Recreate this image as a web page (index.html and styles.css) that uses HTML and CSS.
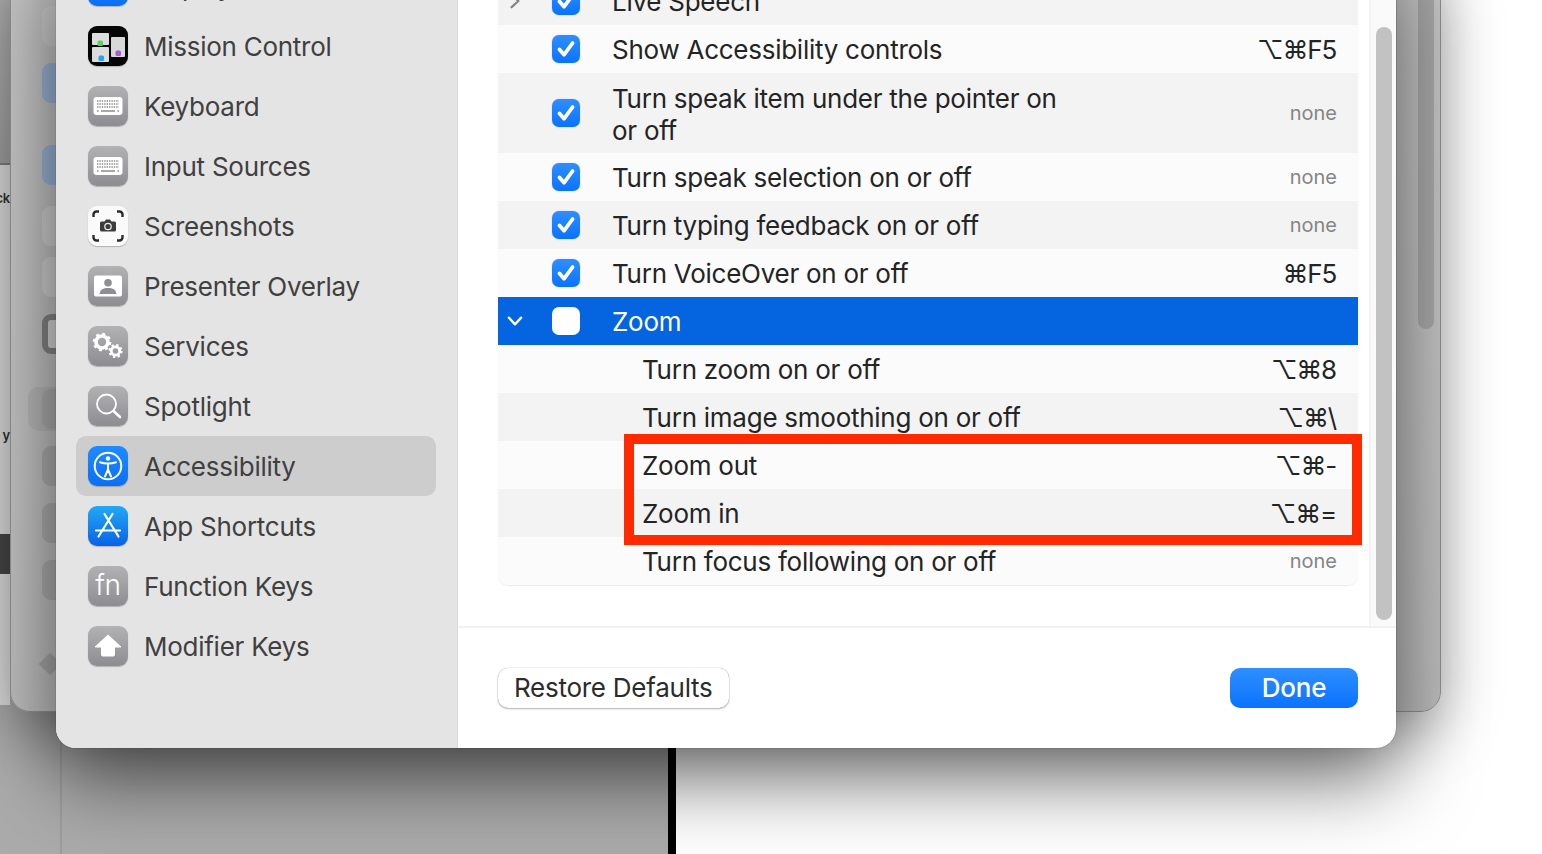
FILE: index.html
```html
<!DOCTYPE html>
<html lang="en">
<head>
    <meta charset="UTF-8">
    <meta name="viewport" content="width=device-width, initial-scale=1.0">
    <title>Keyboard Shortcuts - Accessibility</title>
    <link rel="stylesheet" href="styles.css">
</head>
<body>
    <svg class="defs" width="0" height="0" aria-hidden="true">
        <symbol id="keyboard" viewBox="0 0 40 40">
            <rect x="5.5" y="11" width="29" height="18" rx="3" fill="#fff"/>
            <path d="M9 15h22M9 18h22M9 21h22" stroke="#8c8c90" stroke-width="1.6" stroke-dasharray="1.4 1"/>
            <path d="M13 25h14" stroke="#8c8c90" stroke-width="1.6"/>
            <path d="M9 25h1.6M29.4 25H31" stroke="#8c8c90" stroke-width="1.6"/>
        </symbol>
        <symbol id="tick" viewBox="0 0 28 28">
            <path d="M7.5 14.5l4.6 5.2L20.6 8" fill="none" stroke="#fff" stroke-width="3.800" stroke-linecap="round" stroke-linejoin="round"/>
        </symbol>
    </svg>

    <div class="desktop">
        <div class="pane-gray"></div>
        <div class="pane-bar"></div>
        <div class="pane-white"></div>
    </div>

    <div class="under-strip">
        <div class="strip-top"></div>
        <div class="strip-light strip-a"><span class="strip-ck">ck</span><span class="strip-y">y</span></div>
        <div class="strip-dark"></div>
        <div class="strip-light strip-b"></div>
    </div>

    <div class="back-window">
        <div class="ghosts">
            <div class="ghost g-pink"></div>
            <div class="ghost g-blue"></div>
            <div class="ghost g-blue g-wide"></div>
            <div class="ghost g-pale"></div>
            <div class="ghost g-pale g-tight"></div>
            <div class="ghost g-dark"></div>
            <div class="ghost g-grey g-sel"></div>
            <div class="ghost g-grey"></div>
            <div class="ghost g-grey"></div>
            <div class="ghost g-grey"></div>
            <div class="ghost-tri"></div>
        </div>
        <div class="back-scroll"><div class="back-thumb"></div></div>
    </div>

    <div class="dialog">
        <aside class="sidebar">
            <div class="side-item">
                <span class="ico ico-blue"></span><span class="side-label">Displays</span>
            </div>
            <div class="side-item">
                <span class="ico ico-black">
                    <svg viewBox="0 0 40 40">
                        <rect x="4" y="7" width="17" height="12" rx="1" fill="#dcdcdc"/>
                        <rect x="4" y="21" width="17" height="15" rx="1" fill="#dcdcdc"/>
                        <rect x="23" y="11" width="14" height="20" rx="1" fill="#d8d8d8"/>
                        <rect x="9.5" y="14.500" width="5.500" height="5.500" rx="1.5" fill="#52d65a"/>
                        <rect x="10.500" y="29.500" width="5.500" height="5.500" rx="1.5" fill="#27a4f2"/>
                        <rect x="27.500" y="24.500" width="5.500" height="5.500" rx="1.500" fill="#a65bd6"/>
                    </svg>
                </span>
                <span class="side-label">Mission Control</span>
            </div>
            <div class="side-item">
                <span class="ico ico-gray"><svg viewBox="0 0 40 40"><use href="#keyboard"/></svg></span>
                <span class="side-label">Keyboard</span>
            </div>
            <div class="side-item">
                <span class="ico ico-gray"><svg viewBox="0 0 40 40"><use href="#keyboard"/></svg></span>
                <span class="side-label">Input Sources</span>
            </div>
            <div class="side-item">
                <span class="ico ico-white">
                    <svg viewBox="0 0 40 40">
                        <path d="M5.500 11V8.500a3 3 0 0 1 3-3H11M29 5.500h2.500a3 3 0 0 1 3 3V11M34.500 29v2.500a3 3 0 0 1-3 3H29M11 34.500H8.500a3 3 0 0 1-3-3V29" fill="none" stroke="#2b2b2b" stroke-width="2.400"/>
                        <path d="M13.500 15.500h3l1.500-2h4l1.500 2h3a1.500 1.500 0 0 1 1.500 1.500v7a1.500 1.500 0 0 1-1.500 1.500h-13a1.500 1.500 0 0 1-1.500-1.500v-7a1.500 1.500 0 0 1 1.500-1.500z" fill="#3c3c3c"/>
                        <circle cx="20" cy="20.500" r="3.200" fill="none" stroke="#e8e8e8" stroke-width="1.300"/>
                    </svg>
                </span>
                <span class="side-label">Screenshots</span>
            </div>
            <div class="side-item">
                <span class="ico ico-gray">
                    <svg viewBox="0 0 40 40">
                        <rect x="6" y="9.500" width="28" height="21" rx="2" fill="#fff"/>
                        <circle cx="20" cy="16.800" r="3.800" fill="#8e8e92"/>
                        <path d="M11.500 28c.5-4.500 4-6 8.500-6s8 1.500 8.500 6z" fill="#8e8e92"/>
                    </svg>
                </span>
                <span class="side-label">Presenter Overlay</span>
            </div>
            <div class="side-item">
                <span class="ico ico-gray">
                    <svg viewBox="0 0 40 40">
                        <circle cx="14" cy="16" r="6" fill="none" stroke="#fff" stroke-width="3.600"/>
                        <circle cx="14" cy="16" r="8" fill="none" stroke="#fff" stroke-width="2.600" stroke-dasharray="2.900 3.380"/>
                        <circle cx="27.500" cy="25" r="4.200" fill="none" stroke="#fff" stroke-width="2.800"/>
                        <circle cx="27.500" cy="25" r="6" fill="none" stroke="#fff" stroke-width="2.200" stroke-dasharray="2.300 2.410"/>
                    </svg>
                </span>
                <span class="side-label">Services</span>
            </div>
            <div class="side-item">
                <span class="ico ico-gray">
                    <svg viewBox="0 0 40 40">
                        <circle cx="18.500" cy="18" r="9.500" fill="none" stroke="#fff" stroke-width="1.800"/>
                        <path d="M25.500 25l6.500 6" stroke="#fff" stroke-width="2.600" stroke-linecap="round"/>
                    </svg>
                </span>
                <span class="side-label">Spotlight</span>
            </div>
            <div class="side-item is-selected">
                <span class="ico ico-blue">
                    <svg viewBox="0 0 40 40">
                        <circle cx="20" cy="20" r="13.300" fill="none" stroke="#fff" stroke-width="2"/>
                        <circle cx="20" cy="12.500" r="2.200" fill="#fff"/>
                        <path d="M12 16.200c2.600 1 5.300 1.400 8 1.400s5.400-.4 8-1.400M20 18v6M20 23.500L17 30.500M20 23.500l3 7" fill="none" stroke="#fff" stroke-width="2" stroke-linecap="round"/>
                    </svg>
                </span>
                <span class="side-label">Accessibility</span>
            </div>
            <div class="side-item">
                <span class="ico ico-store">
                    <svg viewBox="0 0 40 40">
                        <path d="M16.500 8L30.500 30.500M24.500 8L10.500 30.500M8 24.500h24" fill="none" stroke="#fff" stroke-width="2.200" stroke-linecap="round"/>
                    </svg>
                </span>
                <span class="side-label">App Shortcuts</span>
            </div>
            <div class="side-item">
                <span class="ico ico-gray ico-fn">fn</span>
                <span class="side-label">Function Keys</span>
            </div>
            <div class="side-item">
                <span class="ico ico-gray">
                    <svg viewBox="0 0 40 40">
                        <path d="M20 8.500L33 20.500a.6.600 0 0 1-.4 1H27v7a2 2 0 0 1-2 2h-10a2 2 0 0 1-2-2v-7H7.400a.6.600 0 0 1-.4-1z" fill="#fff"/>
                    </svg>
                </span>
                <span class="side-label">Modifier Keys</span>
            </div>
        </aside>

        <main class="main">
            <div class="content">
                <div class="list-area">
                    <div class="list">
                        <div class="row">
                            <span class="caret">
                                <svg viewBox="0 0 16 16"><path d="M5 2.500l6 5.500-6 5.500" fill="none" stroke="#858585" stroke-width="2" stroke-linecap="round" stroke-linejoin="round"/></svg>
                            </span>
                            <span class="check"><svg viewBox="0 0 28 28"><use href="#tick"/></svg></span>
                            <span class="label">Live Speech</span>
                        </div>
                        <div class="row row-odd">
                            <span class="caret"></span>
                            <span class="check"><svg viewBox="0 0 28 28"><use href="#tick"/></svg></span>
                            <span class="label">Show Accessibility controls</span>
                            <span class="keys">⌥⌘F5</span>
                        </div>
                        <div class="row">
                            <span class="caret"></span>
                            <span class="check"><svg viewBox="0 0 28 28"><use href="#tick"/></svg></span>
                            <span class="label label-wrap">Turn speak item under the pointer on or off</span>
                            <span class="keys keys-none">none</span>
                        </div>
                        <div class="row row-odd">
                            <span class="caret"></span>
                            <span class="check"><svg viewBox="0 0 28 28"><use href="#tick"/></svg></span>
                            <span class="label">Turn speak selection on or off</span>
                            <span class="keys keys-none">none</span>
                        </div>
                        <div class="row">
                            <span class="caret"></span>
                            <span class="check"><svg viewBox="0 0 28 28"><use href="#tick"/></svg></span>
                            <span class="label">Turn typing feedback on or off</span>
                            <span class="keys keys-none">none</span>
                        </div>
                        <div class="row row-odd">
                            <span class="caret"></span>
                            <span class="check"><svg viewBox="0 0 28 28"><use href="#tick"/></svg></span>
                            <span class="label">Turn VoiceOver on or off</span>
                            <span class="keys">⌘F5</span>
                        </div>
                        <div class="row row-active">
                            <span class="caret">
                                <svg viewBox="0 0 16 16"><path d="M2.500 5l5.500 6 5.500-6" fill="none" stroke="#fff" stroke-width="2" stroke-linecap="round" stroke-linejoin="round"/></svg>
                            </span>
                            <span class="check check-off"></span>
                            <span class="label">Zoom</span>
                        </div>
                        <div class="row row-odd row-sub">
                            <span class="label">Turn zoom on or off</span>
                            <span class="keys">⌥⌘8</span>
                        </div>
                        <div class="row row-sub">
                            <span class="label">Turn image smoothing on or off</span>
                            <span class="keys">⌥⌘\</span>
                        </div>
                        <div class="row row-odd row-sub">
                            <span class="label">Zoom out</span>
                            <span class="keys">⌥⌘-</span>
                        </div>
                        <div class="row row-sub">
                            <span class="label">Zoom in</span>
                            <span class="keys">⌥⌘=</span>
                        </div>
                        <div class="row row-odd row-sub row-last">
                            <span class="label">Turn focus following on or off</span>
                            <span class="keys keys-none">none</span>
                        </div>
                    </div>
                </div>
                <div class="scroll-col"><div class="scroll-thumb"></div></div>
            </div>
            <footer class="footer">
                <button class="btn" type="button">Restore Defaults</button>
                <button class="btn btn-primary" type="button">Done</button>
            </footer>
        </main>
    </div>

    <div class="callout"></div>
</body>
</html>
```

FILE: styles.css
```css
:root {
    --blue-top: #2f8fff;
    --blue-bottom: #0a72ff;
    --sidebar-bg: #e4e4e4;
    --row-light: #fbfbfb;
    --row-dark: #f3f3f3;
    --text-dark: #242424;
    --text-side: #404040;
}

* {
    margin: 0;
    padding: 0;
    box-sizing: border-box;
}

html, body {
    width: 1542px;
    height: 854px;
    overflow: hidden;
}

body {
    position: relative;
    font-family: Inter, "DejaVu Sans", sans-serif;
    letter-spacing: -0.26px;
    background-color: #fff;
}

.defs {
    position: absolute;
}

/* things behind the windows */
.desktop {
    display: flex;
    height: 100%;
}

.pane-gray {
    width: 668px;
    background: linear-gradient(to right, #ababab 60px, #8f8f8f 61px, #ababab 62px);
}

.pane-bar {
    width: 8px;
    background-color: #000;
}

.pane-white {
    flex: 1;
    background-color: #fff;
}

.under-strip {
    position: absolute;
    left: 0;
    top: 0;
    width: 10px;
    height: 705px;
    display: flex;
    flex-direction: column;
    overflow: hidden;
}

.strip-top {
    height: 165px;
    background: linear-gradient(to bottom, #b4b4b4, #a2a2a2);
    border-bottom: 2px solid #808080;
}

.strip-light {
    background-color: #e0e0e0;
    position: relative;
}

.strip-a {
    height: 369px;
}

.strip-b {
    flex: 1;
}

.strip-dark {
    height: 40px;
    background-color: #474747;
}

.strip-ck,
.strip-y {
    position: absolute;
    right: 0;
    font-size: 13px;
    font-weight: 600;
    color: #333;
}

.strip-ck {
    top: 25px;
}

.strip-y {
    top: 262px;
}

.back-window {
    position: absolute;
    left: 10px;
    top: -40px;
    width: 1431px;
    height: 752px;
    display: flex;
    justify-content: space-between;
    background: linear-gradient(to bottom, #c6c6c6, #bdbdbd);
    border: 1px solid #8f8f8f;
    border-radius: 20px;
    box-shadow: 0 16px 60px rgba(0, 0, 0, 0.35);
}

.ghosts {
    display: flex;
    flex-direction: column;
    padding: 45px 0 0 31px;
}

.ghost {
    width: 40px;
    height: 40px;
    margin-top: 17px;
    border-radius: 9px;
    flex-shrink: 0;
}

.ghost:first-child {
    margin-top: 0;
}

.g-pink {
    background: radial-gradient(circle at 70% 50%, #d89aa4 0 8px, #cdcdcd 12px);
}

.g-blue {
    background-color: #9cb4d6;
}

.g-wide {
    margin-top: 42px;
}

.g-pale {
    background: radial-gradient(circle at 70% 50%, #8fb3cc 0 11px, #cfcfcf 14px);
    margin-top: 21px;
}

.g-tight {
    margin-top: 11px;
}

.g-dark {
    background-color: #858585;
    border: 6px solid #858585;
    background-image: linear-gradient(#d5d5d5, #d5d5d5);
}

.g-grey {
    background-color: #adadad;
}

.g-sel {
    margin-top: 35px;
    box-shadow: -12px 0 0 2px #b6b6b6;
}

.ghost-tri {
    width: 16px;
    height: 16px;
    margin: 56px 0 0 0;
    background-color: #a6a6a6;
    transform: rotate(45deg);
}

.back-scroll {
    width: 44px;
    padding-left: 7px;
    border-left: 1px solid #b2b2b2;
}

.back-thumb {
    width: 16px;
    height: 368px;
    margin-left: 14px;
    border-radius: 8px;
    background-color: #a8a8a8;
}

/* main dialog */
.dialog {
    position: absolute;
    left: 56px;
    top: -60px;
    width: 1340px;
    height: 808px;
    display: flex;
    overflow: hidden;
    background-color: #fff;
    border-radius: 20px;
    box-shadow: 0 30px 80px rgba(0, 0, 0, 0.58), 0 0 1px rgba(0, 0, 0, 0.6);
}

.sidebar {
    width: 402px;
    padding: 16px 21px 0 20px;
    background-color: var(--sidebar-bg);
    border-right: 1px solid #dcdcdc;
    flex-shrink: 0;
}

.side-item {
    display: flex;
    align-items: center;
    height: 60px;
    padding-left: 12px;
    border-radius: 10px;
}

.side-item.is-selected {
    background-color: #cdcdcd;
}

.side-label {
    margin-left: 16px;
    font-size: 26px;
    color: var(--text-side);
}

.ico {
    width: 40px;
    height: 40px;
    border-radius: 9px;
    display: block;
    flex-shrink: 0;
    overflow: hidden;
    box-shadow: 0 1px 1px rgba(0, 0, 0, 0.22);
}

.ico svg {
    display: block;
    width: 40px;
    height: 40px;
}

.ico-gray {
    background: linear-gradient(to bottom, #b2b2b5, #8d8d91);
}

.ico-blue {
    background: linear-gradient(to bottom, #1f8bff, #0a6ff5);
}

.ico-black {
    background-color: #050505;
}

.ico-white {
    background-color: #fafafa;
}

.ico-store {
    background: linear-gradient(to bottom, #22a9f5, #0a62e6);
}

.ico-fn {
    color: #fff;
    font-size: 28px;
    line-height: 38px;
    text-align: center;
    font-weight: 300;
}

.main {
    flex: 1;
    display: flex;
    flex-direction: column;
    min-width: 0;
}

.content {
    flex: 1;
    display: flex;
    min-height: 0;
    border-bottom: 2px solid #f2f2f2;
}

.list-area {
    flex: 1;
    padding: 37px 11px 0 40px;
}

.list {
    border-bottom: 1px solid #ebebeb;
    border-radius: 0 0 10px 10px;
}

.row {
    display: flex;
    align-items: center;
    min-height: 48px;
    font-size: 26px;
    color: var(--text-dark);
    background-color: var(--row-dark);
}

.row-odd {
    background-color: var(--row-light);
}

.row-last {
    border-radius: 0 0 10px 10px;
}

.row-active {
    background-color: #0565e0;
    color: #fff;
}

.row-sub {
    padding-left: 144px;
}

.caret {
    width: 54px;
    padding-left: 8px;
    flex-shrink: 0;
    display: flex;
    align-items: center;
}

.caret svg {
    width: 18px;
    height: 18px;
}

.check {
    width: 28px;
    height: 28px;
    flex-shrink: 0;
    border-radius: 7px;
    background: linear-gradient(to bottom, var(--blue-top), var(--blue-bottom));
    box-shadow: 0 0 1px rgba(0, 90, 220, 0.5);
}

.check svg {
    display: block;
}

.check-off {
    background: #fff;
}

.label {
    margin-left: 32px;
    padding-top: 2px;
    line-height: 32px;
}

.row-sub .label {
    margin-left: 0;
}

.label-wrap {
    max-width: 460px;
    padding: 10px 0 6px;
}

.keys {
    margin-left: auto;
    padding-right: 22px;
    padding-top: 1px;
    letter-spacing: -1.2px;
    white-space: nowrap;
}

.keys-none {
    padding-right: 21px;
    padding-top: 0;
    font-size: 20px;
    letter-spacing: 0;
    color: #858585;
}

.scroll-col {
    width: 27px;
    padding: 87px 4px 6px 5px;
    background-color: #fafafa;
    border-left: 2px solid #f3f3f3;
    display: flex;
}

.scroll-thumb {
    flex: 1;
    border-radius: 8px;
    background-color: #c2c2c2;
}

.footer {
    height: 120px;
    flex-shrink: 0;
    display: flex;
    justify-content: space-between;
    padding: 40px 38px 0 40px;
}

.btn {
    height: 40px;
    padding: 0 16px 2px;
    font-family: inherit;
    font-size: 26px;
    letter-spacing: inherit;
    color: #2c2c2c;
    background-color: #fff;
    border: none;
    border-radius: 10px;
    box-shadow: 0 0 1px rgba(0, 0, 0, 0.45), 0 1px 2px rgba(0, 0, 0, 0.28);
}

.btn-primary {
    width: 128px;
    padding: 0 0 2px;
    font-weight: 500;
    color: #fff;
    background: linear-gradient(to bottom, var(--blue-top), var(--blue-bottom));
    box-shadow: none;
}

/* annotation drawn on the screenshot */
.callout {
    position: absolute;
    left: 624px;
    top: 434px;
    width: 738px;
    height: 111px;
    border: 10px solid #ff2a00;
}
```
